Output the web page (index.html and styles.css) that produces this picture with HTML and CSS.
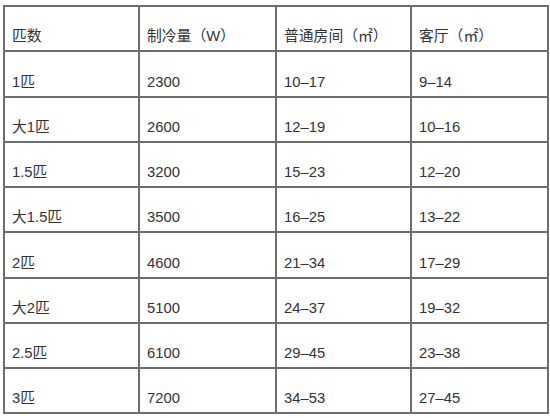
FILE: index.html
```html
<!DOCTYPE html>
<html lang="zh">
<head>
<meta charset="utf-8">
<link rel="stylesheet" href="styles.css">
</head>
<body>
<table class="spec">
  <colgroup>
    <col class="c1"><col class="c2"><col class="c3"><col class="c4">
  </colgroup>
  <tr><td>匹数</td><td>制冷量（W）</td><td>普通房间（㎡）</td><td>客厅（㎡）</td></tr>
  <tr><td>1匹</td><td>2300</td><td>10–17</td><td>9–14</td></tr>
  <tr><td>大1匹</td><td>2600</td><td>12–19</td><td>10–16</td></tr>
  <tr><td>1.5匹</td><td>3200</td><td>15–23</td><td>12–20</td></tr>
  <tr><td>大1.5匹</td><td>3500</td><td>16–25</td><td>13–22</td></tr>
  <tr><td>2匹</td><td>4600</td><td>21–34</td><td>17–29</td></tr>
  <tr><td>大2匹</td><td>5100</td><td>24–37</td><td>19–32</td></tr>
  <tr><td>2.5匹</td><td>6100</td><td>29–45</td><td>23–38</td></tr>
  <tr><td>3匹</td><td>7200</td><td>34–53</td><td>27–45</td></tr>
</table>
</body>
</html>
```

FILE: styles.css
```css
html, body {
  margin: 0;
  padding: 0;
  background: #ffffff;
}
body {
  padding: 5px 0 0 3px;
  font-family: "Liberation Sans", "Noto Sans CJK SC", sans-serif;
  color: #333333;
}
.spec {
  border-collapse: collapse;
  table-layout: fixed;
  width: 544px;
}
.c1 { width: 135px; }
.c2 { width: 137px; }
.c3 { width: 135px; }
.c4 { width: 137px; }
.spec td {
  border: 2px solid #6e6e6e;
  height: 45.25px;
  box-sizing: border-box;
  padding: 0 0 5px 7px;
  vertical-align: bottom;
  font-size: 14.8px;
  line-height: 18px;
  white-space: nowrap;
}
```
